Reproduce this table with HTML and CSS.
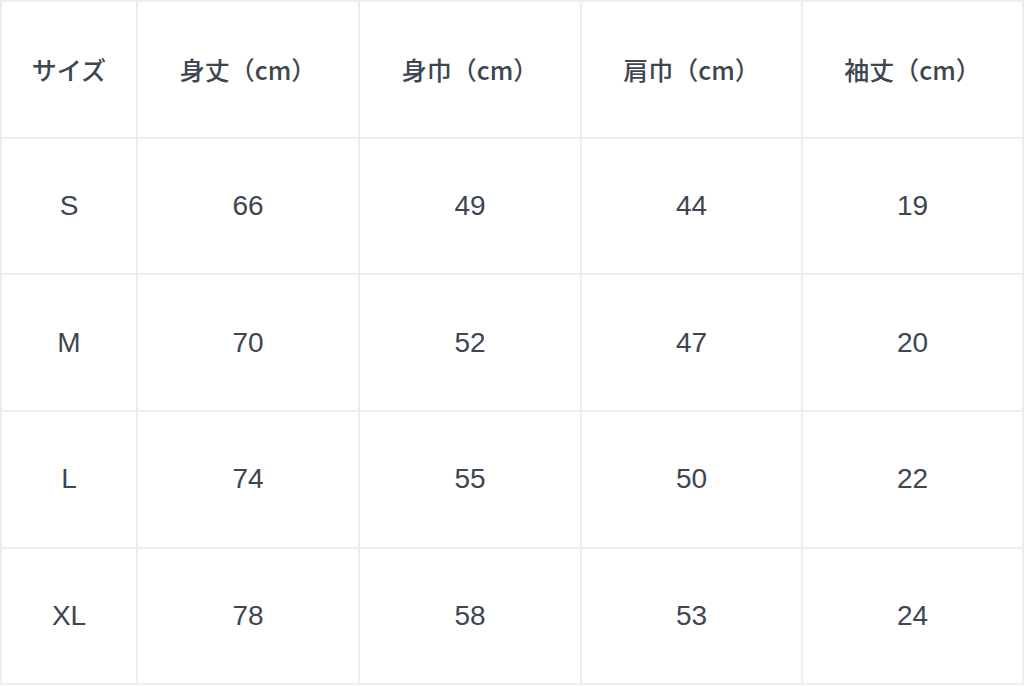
FILE: index.html
```html
<!DOCTYPE html>
<html lang="ja">
<head>
<meta charset="utf-8">
<link rel="stylesheet" href="styles.css">
</head>
<body>
<table class="size-table">
  <colgroup>
    <col class="col-a">
    <col class="col-b"><col class="col-b"><col class="col-c"><col class="col-d">
  </colgroup>
  <thead>
    <tr><th>サイズ</th><th>身丈（cm）</th><th>身巾（cm）</th><th>肩巾（cm）</th><th>袖丈（cm）</th></tr>
  </thead>
  <tbody>
    <tr><td>S</td><td>66</td><td>49</td><td>44</td><td>19</td></tr>
    <tr><td>M</td><td>70</td><td>52</td><td>47</td><td>20</td></tr>
    <tr><td>L</td><td>74</td><td>55</td><td>50</td><td>22</td></tr>
    <tr><td>XL</td><td>78</td><td>58</td><td>53</td><td>24</td></tr>
  </tbody>
</table>
</body>
</html>
```
FILE: styles.css
```css
html, body {
  margin: 0;
  padding: 0;
  background: #ffffff;
}
.size-table {
  width: 1022px;
  border-collapse: collapse;
  table-layout: fixed;
  color: #3d4651;
  font-family: "Liberation Sans", "Noto Sans CJK JP", sans-serif;
}
.col-a { width: 136px; }
.col-b { width: 222px; }
.col-c { width: 221px; }
.col-d { width: 221px; }
.size-table th,
.size-table td {
  border: 2px solid #eeeeee;
  height: 134.7px;
  padding: 0;
  text-align: center;
  vertical-align: middle;
}
.size-table th {
  font-family: "Noto Sans CJK JP", sans-serif;
  font-weight: 500;
  font-size: 25px;
}
.size-table td {
  font-size: 28px;
  font-weight: 400;
}
```
